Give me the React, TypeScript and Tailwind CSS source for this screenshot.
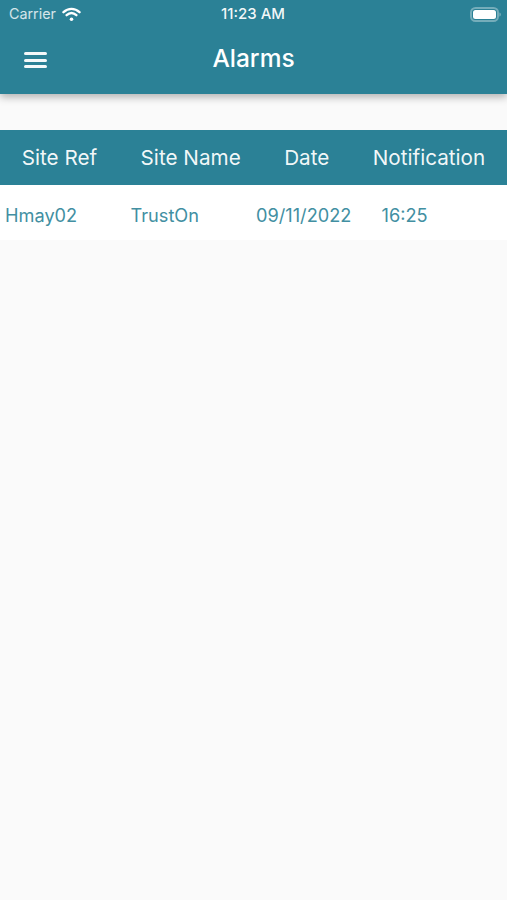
import React from "react";

const headers = ["Site Ref", "Site Name", "Date", "Notification"];
const row = ["Hmay02", "TrustOn", "09/11/2022", "16:25"];

const App: React.FC = () => {
  return (
    <div className="w-[507px] h-[900px] overflow-hidden bg-[#fafafa] font-['Inter','Liberation_Sans',sans-serif]">
      {/* top bar */}
      <header className="h-[94px] bg-[#2b8196] text-white shadow-[0_3px_8px_rgba(0,0,0,0.3)]">
        <div className="relative flex h-[28px] items-center justify-between pl-[9px] pr-[6px]">
          <div className="flex items-center gap-[6px] text-[14.300px] text-white/80">
            <span>Carrier</span>
            <svg width="19" height="14" viewBox="0 0 19 14" fill="none" stroke="white" strokeLinecap="round">
              <path d="M1.500 5.200C6.200 .8 12.800 .8 17.500 5.200" strokeWidth="2.400" />
              <path d="M4.600 8.200C7.600 5.400 11.400 5.400 14.400 8.200" strokeWidth="2.400" />
              <path d="M9.500 12.200v0" strokeWidth="3.600" />
            </svg>
          </div>
          <span className="absolute left-[221px] top-[5px] text-[15px] font-medium leading-[18px] text-white/95">11:23 AM</span>
          <svg width="31" height="15" viewBox="0 0 31 15">
            <rect x="1" y="1" width="27" height="13" rx="4.500" fill="none" stroke="white" strokeOpacity="0.35" strokeWidth="2" />
            <rect x="3" y="3" width="23" height="9" rx="2.500" fill="white" />
            <path d="M29.500 5.500v4c.8-.3 1.200-1 1.200-2s-.4-1.700-1.200-2z" fill="white" fillOpacity="0.45" />
          </svg>
        </div>
        <div className="relative flex h-[60px] items-center justify-center">
          <button className="absolute left-[24px] top-[24px] flex w-[23px] flex-col gap-[3.500px]">
            <span className="h-[3px] rounded-full bg-white/95" />
            <span className="h-[3px] rounded-full bg-white/95" />
            <span className="h-[3px] rounded-full bg-white/95" />
          </button>
          <h1 className="text-[24.500px] font-medium leading-[30px]">Alarms</h1>
        </div>
      </header>

      {/* table */}
      <div className="mt-[36px]">
        <div className="flex h-[55px] items-center justify-around bg-[#2b8196] text-[20.700px] text-white/95">
          {headers.map((h) => (
            <span key={h}>{h}</span>
          ))}
        </div>
        <div className="grid h-[55px] grid-cols-4 items-center bg-white pl-[5px] pt-[7px] text-[18.200px] text-[#428fa2]">
          {row.map((c) => (
            <span key={c}>{c}</span>
          ))}
        </div>
      </div>
    </div>
  );
};

export default App;
